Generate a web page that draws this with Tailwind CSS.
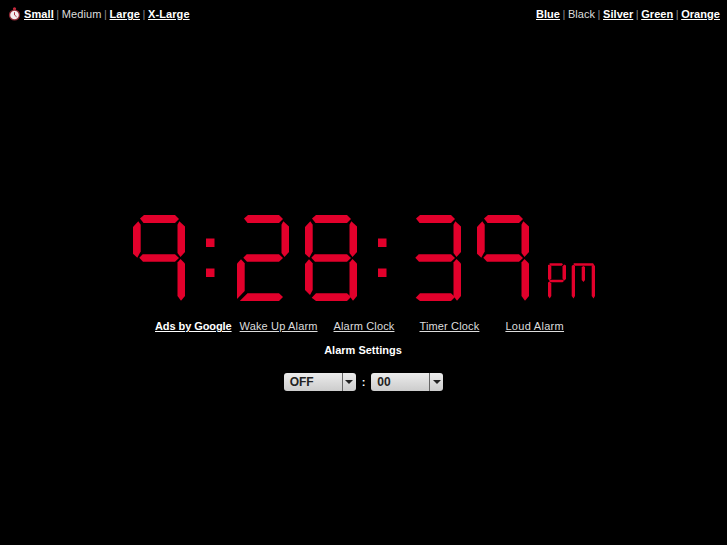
<!DOCTYPE html>
<html lang="en">
<head>
    <meta charset="UTF-8">
    <title>Online Clock</title>
    <script src="https://cdn.jsdelivr.net/npm/@tailwindcss/browser@4"></script>
</head>
<body class="bg-black">

<div class="w-[727px] h-[545px] overflow-hidden bg-black text-white antialiased font-['Liberation_Sans',Arial,sans-serif] text-[11px] leading-[14px]">

    <!-- hidden segment shapes, digits below reuse them -->
    <svg class="hidden">
        <defs>
            <polygon id="seg-a" points="11,0 42,0 46,4 42,8 10.5,8 7,3.5"/>
            <polygon id="seg-b" points="46.3,6.3 52,11.5 52,37 47.5,42 44.5,38 44.5,9.7"/>
            <polygon id="seg-c" points="47.5,44 52,48.5 52,81 48,85.7 44.5,81 44.5,47.5"/>
            <polygon id="seg-d" points="11,78.3 42,78.3 46,82 42,86 11,86 6.7,82.7"/>
            <polygon id="seg-e" points="4,44.3 7.7,48.3 7.7,75 5,80 0,75 0,49"/>
            <polygon id="seg-f" points="5.3,6.3 7.7,9.7 7.7,36.5 4.3,42.7 0,38.7 0,12"/>
            <polygon id="seg-g" points="9.7,39.3 42,39.3 46,43 42,46.7 10,46.7 6.3,42.7"/>
        </defs>
    </svg>

    <!-- top bar -->
    <div class="flex justify-between items-center pl-[8px] pr-[7px] pt-[7px] h-[21px]">
        <div class="flex items-center text-[#ddd] tracking-[0.1px]">
            <svg class="w-[13px] h-[14px] mr-[3px]" viewBox="0 0 13 14">
                <circle cx="6.5" cy="1.8" r="1.6" fill="#c8283c"/>
                <circle cx="6.5" cy="8" r="5.6" fill="#8f2a36"/>
                <circle cx="6.5" cy="8" r="4.3" fill="#f4ecee"/>
                <path d="M6.5 5.2V8L8.6 9.8" stroke="#a8303f" stroke-width="1" fill="none"/>
            </svg>
            <a href="#" class="font-bold text-white underline">Small</a>
            <span class="mx-[2.5px] text-[#888]">|</span>
            <span>Medium</span>
            <span class="mx-[2.5px] text-[#888]">|</span>
            <a href="#" class="font-bold text-white underline">Large</a>
            <span class="mx-[2.5px] text-[#888]">|</span>
            <a href="#" class="font-bold text-white underline">X-Large</a>
        </div>
        <div class="flex items-center text-[#ddd] tracking-[0.05px]">
            <a href="#" class="font-bold text-white underline">Blue</a>
            <span class="mx-[2.5px] text-[#888]">|</span>
            <span>Black</span>
            <span class="mx-[2.5px] text-[#888]">|</span>
            <a href="#" class="font-bold text-white underline">Silver</a>
            <span class="mx-[2.5px] text-[#888]">|</span>
            <a href="#" class="font-bold text-white underline">Green</a>
            <span class="mx-[2.5px] text-[#888]">|</span>
            <a href="#" class="font-bold text-white underline">Orange</a>
        </div>
    </div>

    <!-- clock -->
    <div class="flex items-start mt-[194px] pl-[133px] h-[86px] fill-[#e2002b]">
        <svg class="w-[52px] h-[86px]" viewBox="0 0 52 86">
            <use href="#seg-a"/><use href="#seg-b"/><use href="#seg-c"/><use href="#seg-f"/><use href="#seg-g"/>
        </svg>
        <svg class="w-[9px] h-[86px] ml-[21px]" viewBox="0 0 9 86">
            <rect x="0" y="23.5" width="8.5" height="8.5"/><rect x="0" y="53.5" width="8.5" height="8.5"/>
        </svg>
        <svg class="w-[52px] h-[86px] ml-[22px]" viewBox="0 0 52 86">
            <use href="#seg-a"/><use href="#seg-b"/><use href="#seg-g"/>
            <polygon points="0,48.5 4,44.3 7.7,48.3 7.7,76 0,84"/>
            <polygon points="3,85.7 10.5,78.3 42,78.3 46,82 42,86 3,86"/>
        </svg>
        <svg class="w-[52px] h-[86px] ml-[16px]" viewBox="0 0 52 86">
            <use href="#seg-a"/><use href="#seg-b"/><use href="#seg-c"/><use href="#seg-d"/><use href="#seg-e"/><use href="#seg-f"/><use href="#seg-g"/>
        </svg>
        <svg class="w-[9px] h-[86px] ml-[21px]" viewBox="0 0 9 86">
            <rect x="0" y="23.5" width="8.5" height="8.5"/><rect x="0" y="53.5" width="8.5" height="8.5"/>
        </svg>
        <svg class="w-[52px] h-[86px] ml-[22px]" viewBox="0 0 52 86">
            <use href="#seg-a"/><use href="#seg-b"/><use href="#seg-c"/><use href="#seg-d"/><use href="#seg-g"/>
        </svg>
        <svg class="w-[52px] h-[86px] ml-[16px]" viewBox="0 0 52 86">
            <use href="#seg-a"/><use href="#seg-b"/><use href="#seg-c"/><use href="#seg-f"/><use href="#seg-g"/>
        </svg>
        <svg class="w-[47px] h-[36px] ml-[19px] mt-[48px]" viewBox="0 0 47 36">
            <polygon points="1.5,0.3 14,0.3 15,1.5 13.5,2.8 2,2.8"/>
            <polygon points="0,2 1.5,1.5 3.3,3.5 3.3,15.5 1.5,17.5 0,16"/>
            <polygon points="14.5,3.5 16.2,1.5 18,2.5 18,16 16,17.8 14.5,15.5"/>
            <polygon points="2,16.7 15,16.7 16,18 14.5,19.2 2.5,19.2 1,18"/>
            <polygon points="0,19.5 1.5,18.5 3.3,20.5 3.3,33 1.7,35.5 0,33"/>
            <polygon points="23.7,3 25.5,1.5 27,3 27,16.5 27,33 25.5,35.5 23.7,33"/>
            <polygon points="25.5,0.3 45,0.3 46,1.5 44.5,2.8 26.5,2.8"/>
            <polygon points="33.7,4 35.5,3 37,4 37,17 35.5,19 33.7,17"/>
            <polygon points="43.7,3 45.5,1.5 47,3 47,33 45.5,35.5 43.7,33"/>
        </svg>
    </div>

    <!-- links -->
    <div class="flex mt-[18px] pl-[155px] text-[#ddd] tracking-[0.15px]">
        <a href="#" class="font-bold text-white underline tracking-[-0.08px]">Ads by Google</a>
        <a href="#" class="underline ml-[8px]">Wake Up Alarm</a>
        <a href="#" class="underline ml-[16px]">Alarm Clock</a>
        <a href="#" class="underline ml-[25px]">Timer Clock</a>
        <a href="#" class="underline ml-[26px] tracking-[0.3px]">Loud Alarm</a>
    </div>

    <div class="text-center font-bold mt-[10px] -ml-px">Alarm Settings</div>

    <!-- alarm selects -->
    <div class="flex justify-center items-center gap-[6px] mt-[16px] font-bold text-[#222] text-[12px]">
        <div class="flex w-[72px] h-[18px] rounded-[3px] bg-gradient-to-b from-[#ececec] to-[#cccccc]">
            <span class="flex-1 pl-[6px] leading-[18px]">OFF</span>
            <span class="flex items-center justify-center w-[14px] border-l border-[#666]">
                <span class="border-x-[4px] border-t-[4px] border-x-transparent border-t-[#222]"></span>
            </span>
        </div>
        <span class="text-white text-[11px]">:</span>
        <div class="flex w-[72px] h-[18px] rounded-[3px] bg-gradient-to-b from-[#ececec] to-[#cccccc]">
            <span class="flex-1 pl-[6px] leading-[18px]">00</span>
            <span class="flex items-center justify-center w-[14px] border-l border-[#666]">
                <span class="border-x-[4px] border-t-[4px] border-x-transparent border-t-[#222]"></span>
            </span>
        </div>
    </div>
</div>

</body>
</html>
